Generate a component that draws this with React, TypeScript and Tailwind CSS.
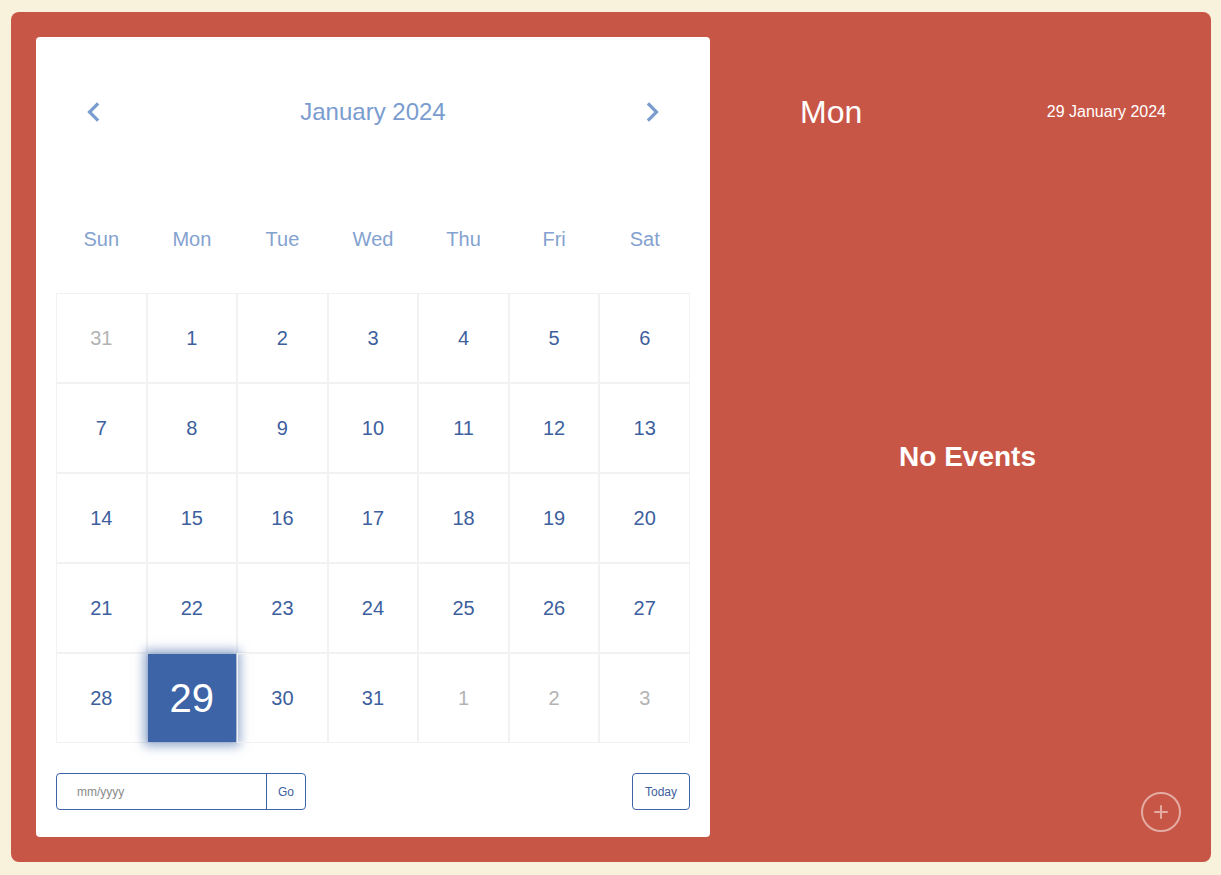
import React from "react";

// ─── data ─────────────────────────────────────────────────────────────────────

type Day = { n: number; muted?: boolean; selected?: boolean };

const weekDays = ["Sun", "Mon", "Tue", "Wed", "Thu", "Fri", "Sat"];

const days: Day[] = [
  { n: 31, muted: true },
  ...Array.from({ length: 31 }, (_, i) => ({ n: i + 1, selected: i + 1 === 29 })),
  { n: 1, muted: true },
  { n: 2, muted: true },
  { n: 3, muted: true },
];

const font = "font-['Liberation_Sans',Arial,sans-serif]";

// ─── icons ────────────────────────────────────────────────────────────────────

function Chevron({ dir }: { dir: "left" | "right" }) {
  return (
    <svg width="16" height="20" viewBox="0 0 16 20" fill="none">
      <path
        d={dir === "left" ? "M12 2.5 L4.5 10 L12 17.5" : "M4 2.5 L11.5 10 L4 17.5"}
        stroke="#7b9ccf"
        strokeWidth="3.2"
        strokeLinecap="square"
        strokeLinejoin="miter"
      />
    </svg>
  );
}

// ─── page ─────────────────────────────────────────────────────────────────────

export default function App() {
  return (
    <div className={`min-h-[875px] bg-[#f8f2dc] p-[11px] pt-[12px] ${font}`}>
      <div className="flex h-[850px] w-[1200px] rounded-lg bg-[#c85646] p-[25px] pr-0">
        {/* Calendar card */}
        <div className="flex w-[674px] flex-col rounded bg-white px-5">
          <div className="flex h-[148px] items-center justify-between px-[29px] pt-[2px]">
            <Chevron dir="left" />
            <span className="text-[24px] text-[#7b9ccf]">January 2024</span>
            <Chevron dir="right" />
          </div>

          <div className="grid h-[108px] grid-cols-7 items-center">
            {weekDays.map((d) => (
              <span key={d} className="text-center text-[20px] text-[#84a2cf]">
                {d}
              </span>
            ))}
          </div>

          <div className="grid grid-cols-7">
            {days.map((d, i) =>
              d.selected ? (
                <div key={i} className="flex h-[90px] items-center justify-center border border-[#f2f2f2]">
                  <div className="flex h-full w-full items-center justify-center bg-[#3d64a6] text-[40px] text-white shadow-[0_0_10px_4px_rgba(61,100,166,0.55)]">
                    {d.n}
                  </div>
                </div>
              ) : (
                <div
                  key={i}
                  className={`flex h-[90px] items-center justify-center border border-[#f2f2f2] text-[20px] ${
                    d.muted ? "text-[#b3b3b3]" : "text-[#3d5f9e]"
                  }`}
                >
                  {d.n}
                </div>
              )
            )}
          </div>

          <div className="mt-[30px] flex items-center justify-between">
            <div className="flex h-[37px] w-[250px] rounded border border-[#3d64a6]">
              <input
                placeholder="mm/yyyy"
                className="min-w-0 flex-1 bg-transparent pl-5 text-[12px] text-[#3d5f9e] outline-none placeholder:text-[#8a8a8a]"
              />
              <button className="w-[39px] border-l border-[#3d64a6] text-[12px] text-[#3d5f9e]">Go</button>
            </div>
            <button className="h-[37px] w-[58px] rounded border border-[#3d64a6] text-[12px] text-[#3d5f9e]">
              Today
            </button>
          </div>
        </div>

        {/* Events panel */}
        <div className="relative flex flex-1 flex-col">
          <div className="flex h-[148px] items-center justify-between pl-[90px] pr-[45px] pt-[2px]">
            <span className="text-[32px] text-white">Mon</span>
            <span className="text-[16px] text-white">29 January 2024</span>
          </div>
          <div className="flex flex-1 items-center justify-center pb-[108px] pl-[14px]">
            <span className="text-[28px] font-bold text-white">No Events</span>
          </div>
          <button className="absolute bottom-[5px] right-[30px] flex h-10 w-10 items-center justify-center rounded-full border-2 border-white/50 text-white/50">
            <svg width="14" height="14" viewBox="0 0 14 14">
              <path d="M7 1 V13 M1 7 H13" stroke="currentColor" strokeWidth="2" strokeLinecap="round" />
            </svg>
          </button>
        </div>
      </div>
    </div>
  );
}
